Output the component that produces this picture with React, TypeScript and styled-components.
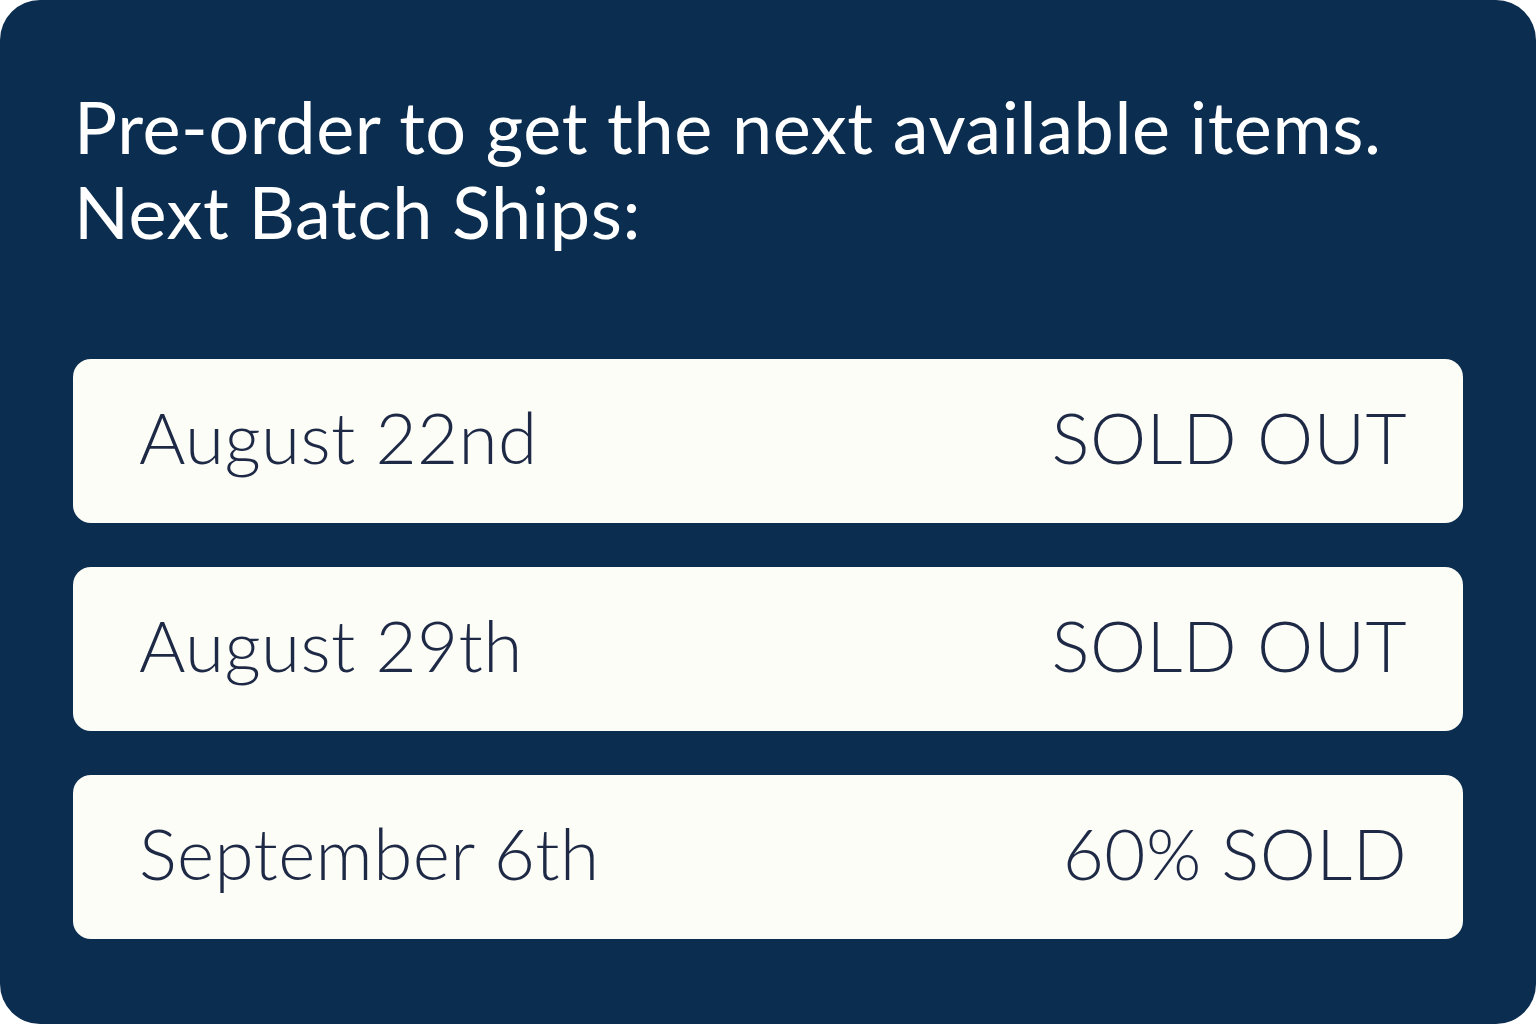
import styled, { createGlobalStyle } from "styled-components";

const GlobalStyle = createGlobalStyle`
    body {
        margin: 0;
        background: #ffffff;
    }
`;

const Card = styled.div`
    width: 1536px;
    height: 1024px;
    box-sizing: border-box;
    background-color: #0b2d50;
    border-radius: 40px;
    padding: 84px 73px 0 73px;
    font-family: Lato, "Noto Sans", sans-serif;
`;

const Title = styled.h1`
    margin: 0 0 0 1px;
    font-size: 72px;
    line-height: 85px;
    font-weight: 400;
    letter-spacing: 0.6px;
    color: #ffffff;
`;

const BatchList = styled.ul`
    list-style: none;
    margin: 105px 0 0 0;
    padding: 0;
    display: flex;
    flex-direction: column;
    gap: 44px;
`;

const Batch = styled.li`
    height: 164px;
    box-sizing: border-box;
    background-color: #fdfdf8;
    border-radius: 18px;
    display: flex;
    align-items: center;
    justify-content: space-between;
    padding: 0 56px 10px 66px;
    color: #1e2a45;
    font-size: 71px;
    font-weight: 300;
    letter-spacing: 0.4px;
`;

const BatchDate = styled.span``;

const BatchStatus = styled.span``;

interface BatchInterface {
    date: string;
    status: string;
}

const batches: BatchInterface[] = [
    { date: "August 22nd", status: "SOLD OUT" },
    { date: "August 29th", status: "SOLD OUT" },
    { date: "September 6th", status: "60% SOLD" },
];

function App() {
    return (
        <>
            <GlobalStyle />
            <Card>
                <Title>
                    Pre-order to get the next available items.
                    <br />
                    Next Batch Ships:
                </Title>
                <BatchList>
                    {batches.map((batch) => (
                        <Batch key={batch.date}>
                            <BatchDate>{batch.date}</BatchDate>
                            <BatchStatus>{batch.status}</BatchStatus>
                        </Batch>
                    ))}
                </BatchList>
            </Card>
        </>
    );
}
export default App;
